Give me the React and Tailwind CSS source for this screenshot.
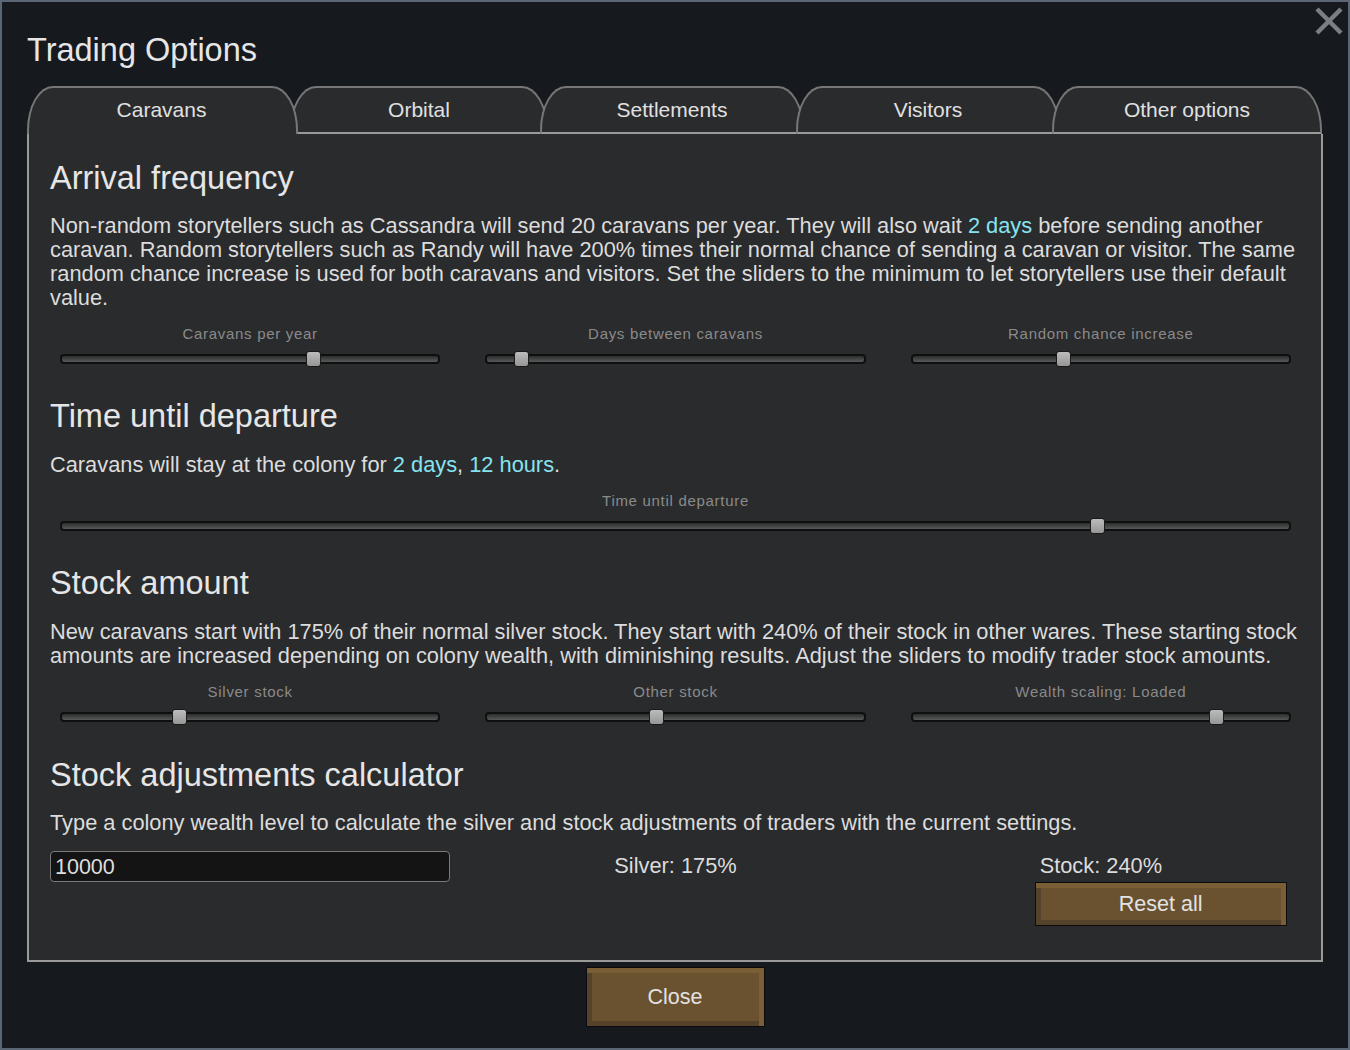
import React from "react";

function Slider({ label, pos }) {
  return (
    <div className="flex flex-col px-[10px]">
      <div className="text-center text-[15px] leading-[18px] tracking-[0.7px] text-[#8a8a8a]">{label}</div>
      <div className="relative mt-[8px] h-[16px]">
        <div className="absolute left-0 right-0 top-[3px] h-[10px] rounded-[4px] border-2 border-[#0e0f0f] bg-linear-to-b from-[#2c2e2d] to-[#585a59]" />
        <div
          className="absolute top-0 h-[16px] w-[15px] rounded-[3px] border border-[#1a1a1a] bg-linear-to-b from-[#bcbcbc] to-[#969696]"
          style={{ left: pos }}
        />
      </div>
    </div>
  );
}

function Cyan({ children }) {
  return <span className="text-[#86e3f0]">{children}</span>;
}

function Button({ children, className }) {
  return (
    <div
      className={
        "flex items-center justify-center border border-[#0b0b0b] bg-[#6a5230] text-[21.5px] text-[#e2e2e2] shadow-[inset_-5px_5px_0_#7a5f36,inset_5px_-5px_0_#54422a] " +
        className
      }
    >
      {children}
    </div>
  );
}

export default function App() {
  const tabs = [
    ["Caravans", 271],
    ["Orbital", 258],
    ["Settlements", 264],
    ["Visitors", 264],
    ["Other options", 270],
  ];
  return (
    <div className="relative flex h-[1050px] w-[1350px] flex-col border-2 border-[#5b6675] bg-[#16191e] pl-[25px] font-['Liberation_Sans',Arial,sans-serif]">
      <svg className="absolute right-[4px] top-[4px]" width="30" height="30" viewBox="0 0 30 30">
        <path d="M3 3 L27 27 M27 3 L3 27" stroke="#7b7f84" strokeWidth="4.5" />
      </svg>

      <div className="pt-[29px] text-[32.5px] leading-[38px] text-[#e6e6e6]">Trading Options</div>

      <div className="mt-[17px] flex h-[48px] w-[1296px]">
        {tabs.map(([t, w], i) =>
          i === 0 ? (
            <div
              key={t}
              style={{ width: w }}
              className="relative z-20 flex shrink-0 items-center justify-center rounded-t-[26px_44px] border-2 border-b-0 border-[#777777] bg-[#2a2b2d] pb-[2px] pr-[2px] text-[21px] text-[#e0e0e0]"
            >
              {t}
            </div>
          ) : (
            <div
              key={t}
              style={{ width: w }}
              className="relative z-10 -ml-[8px] flex shrink-0 items-center justify-center rounded-t-[26px_44px] border-2 border-[#777777] border-b-[#9a9a9a] bg-[#2a2b2d] text-[21px] text-[#e0e0e0]"
            >
              {t}
            </div>
          )
        )}
      </div>

      <div className="flex h-[828px] w-[1296px] flex-col border-2 border-t-0 border-[#9a9a9a] bg-[#2a2b2d] pl-[21px] pr-[20px] text-[21.8px] leading-[24px] text-[#dcdcdc]">
        <div className="mt-[26px] text-[32.5px] leading-[36px] text-[#e6e6e6]">Arrival frequency</div>
        <p className="mt-[18px]">
          Non-random storytellers such as Cassandra will send 20 caravans per year. They will also wait <Cyan>2 days</Cyan> before sending another caravan. Random storytellers such as Randy will have 200% times their normal chance of sending a caravan or visitor. The same random chance increase is used for both caravans and visitors. Set the sliders to the minimum to let storytellers use their default value.
        </p>
        <div className="mt-[15px] grid grid-cols-3 gap-x-[25px]">
          <Slider label="Caravans per year" pos={246} />
          <Slider label="Days between caravans" pos={29} />
          <Slider label="Random chance increase" pos={145} />
        </div>

        <div className="mt-[31px] text-[32.5px] leading-[36px] text-[#e6e6e6]">Time until departure</div>
        <p className="mt-[19px]">
          Caravans will stay at the colony for <Cyan>2 days</Cyan>, <Cyan>12 hours</Cyan>.
        </p>
        <div className="mt-[15px]">
          <Slider label="Time until departure" pos={1030} />
        </div>

        <div className="mt-[31px] text-[32.5px] leading-[36px] text-[#e6e6e6]">Stock amount</div>
        <p className="mt-[19px]">
          New caravans start with 175% of their normal silver stock. They start with 240% of their stock in other wares. These starting stock amounts are increased depending on colony wealth, with diminishing results. Adjust the sliders to modify trader stock amounts.
        </p>
        <div className="mt-[15px] grid grid-cols-3 gap-x-[25px]">
          <Slider label="Silver stock" pos={112} />
          <Slider label="Other stock" pos={164} />
          <Slider label="Wealth scaling: Loaded" pos={298} />
        </div>

        <div className="mt-[32px] text-[32.5px] leading-[36px] text-[#e6e6e6]">Stock adjustments calculator</div>
        <p className="mt-[18px]">
          Type a colony wealth level to calculate the silver and stock adjustments of traders with the current settings.
        </p>
        <div className="mt-[16px] grid grid-cols-3 gap-x-[25px]">
          <div className="flex h-[31px] w-[400px] items-center rounded-[4px] border border-[#7a7a7a] bg-[#141414] pl-[4px] text-[21.5px] text-[#dedede]">
            10000
          </div>
          <div className="pt-[3px] text-center">Silver: 175%</div>
          <div className="flex flex-col pl-[134px] pt-[3px]">
            <div className="pl-[5px]">Stock: 240%</div>
            <Button className="mt-[4px] h-[44px] w-[252px]">Reset all</Button>
          </div>
        </div>
      </div>

      <div className="mt-[5px] flex w-[1296px] justify-center">
        <Button className="h-[60px] w-[179px]">Close</Button>
      </div>
    </div>
  );
}
